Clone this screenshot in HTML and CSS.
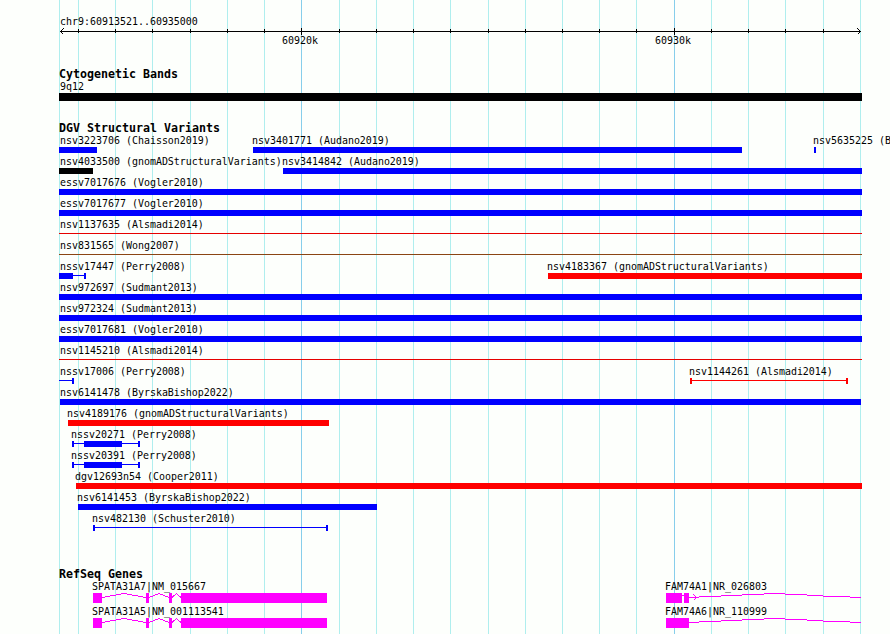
FILE: index.html
```
<!DOCTYPE html>
<html lang="en">
<head>
<meta charset="utf-8">
<title>chr9:60913521..60935000</title>
<link rel="stylesheet" href="styles.css">
</head>
<body>
<svg class="grid" width="890" height="634" aria-hidden="true">
<path class="minor" d="M59.5 0v634M78.5 0v634M115.5 0v634M152.5 0v634M190.5 0v634M227.5 0v634M264.5 0v634M339.5 0v634M376.5 0v634M413.5 0v634M450.5 0v634M488.5 0v634M525.5 0v634M562.5 0v634M599.5 0v634M636.5 0v634M711.5 0v634M748.5 0v634M785.5 0v634M823.5 0v634M860.5 0v634"/>
<path class="major" d="M301.5 0v634M674.5 0v634"/>
</svg>
<main>
<svg class="ruler">
<text x="60" y="25">chr9:60913521..60935000</text>
<path class="axis" d="M60 31.5H861M78.5 29v4M115.5 29v4M152.5 29v4M190.5 29v4M227.5 29v4M264.5 29v4M301.5 28v7M339.5 29v4M376.5 29v4M413.5 29v4M450.5 29v4M488.5 29v4M525.5 29v4M562.5 29v4M599.5 29v4M636.5 29v4M674.5 28v7M711.5 29v4M748.5 29v4M785.5 29v4M823.5 29v4"/>
<path class="axis" d="M63.5 28.5l-3 3l3 3M857.5 28.5l3 3l-3 3"/>
<text x="282" y="44">60920k</text>
<text x="655" y="44">60930k</text>
</svg>

<section class="track bands">
<h2>Cytogenetic Bands</h2>
<svg class="row"><text x="60" y="10">9q12</text><rect x="59" y="13" width="803" height="8"/></svg>
</section>

<section class="track variants">
<h2>DGV Structural Variants</h2>
<svg class="row"><text x="60" y="10">nsv3223706 (Chaisson2019)</text><rect class="gain" x="59" y="13" width="38" height="6"/><text x="252" y="10">nsv3401771 (Audano2019)</text><rect class="gain" x="253" y="13" width="489" height="6"/><text x="813" y="10">nsv5635225 (ByrskaBishop2022)</text><rect class="gain" x="814" y="13" width="2" height="6"/></svg>
<svg class="row"><text x="60" y="10">nsv4033500 (gnomADStructuralVariants)</text><rect x="59" y="13" width="34" height="6"/><text x="282" y="10">nsv3414842 (Audano2019)</text><rect class="gain" x="283" y="13" width="579" height="6"/></svg>
<svg class="row"><text x="60" y="10">essv7017676 (Vogler2010)</text><rect class="gain" x="59" y="13" width="803" height="6"/></svg>
<svg class="row"><text x="60" y="10">essv7017677 (Vogler2010)</text><rect class="gain" x="59" y="13" width="803" height="6"/></svg>
<svg class="row"><text x="60" y="10">nsv1137635 (Alsmadi2014)</text><rect class="thin-loss" x="59" y="15" width="803" height="1"/></svg>
<svg class="row"><text x="60" y="10">nsv831565 (Wong2007)</text><rect class="mixed" x="59" y="15" width="803" height="1"/></svg>
<svg class="row"><text x="60" y="10">nssv17447 (Perry2008)</text><path class="gain" d="M59 13h14v2h11v-2h2v6h-2v-3h-11v3h-14z"/><text x="547" y="10">nsv4183367 (gnomADStructuralVariants)</text><rect class="loss" x="548" y="13" width="314" height="6"/></svg>
<svg class="row"><text x="60" y="10">nsv972697 (Sudmant2013)</text><rect class="gain" x="59" y="13" width="803" height="6"/></svg>
<svg class="row"><text x="60" y="10">nsv972324 (Sudmant2013)</text><rect class="gain" x="59" y="13" width="803" height="6"/></svg>
<svg class="row"><text x="60" y="10">essv7017681 (Vogler2010)</text><rect class="gain" x="59" y="13" width="803" height="6"/></svg>
<svg class="row"><text x="60" y="10">nsv1145210 (Alsmadi2014)</text><rect class="thin-loss" x="59" y="15" width="803" height="1"/></svg>
<svg class="row"><text x="60" y="10">nssv17006 (Perry2008)</text><path class="gain" d="M59 15h13v-2h2v6h-2v-3h-13z"/><text x="689" y="10">nsv1144261 (Alsmadi2014)</text><path class="loss" d="M690 13h2v2h154v-2h2v6h-2v-3h-154v3h-2z"/></svg>
<svg class="row"><text x="60" y="10">nsv6141478 (ByrskaBishop2022)</text><rect class="gain" x="60" y="13" width="801" height="6"/></svg>
<svg class="row"><text x="67" y="10">nsv4189176 (gnomADStructuralVariants)</text><rect class="loss" x="68" y="13" width="261" height="6"/></svg>
<svg class="row"><text x="71" y="10">nssv20271 (Perry2008)</text><path class="gain" d="M72 13h2v2h10v-2h38v2h16v-2h2v6h-2v-3h-16v3h-38v-3h-10v3h-2z"/></svg>
<svg class="row"><text x="71" y="10">nssv20391 (Perry2008)</text><path class="gain" d="M72 13h2v2h10v-2h38v2h16v-2h2v6h-2v-3h-16v3h-38v-3h-10v3h-2z"/></svg>
<svg class="row"><text x="75" y="10">dgv12693n54 (Cooper2011)</text><rect class="loss" x="76" y="13" width="786" height="6"/></svg>
<svg class="row"><text x="77" y="10">nsv6141453 (ByrskaBishop2022)</text><rect class="gain" x="78" y="13" width="299" height="6"/></svg>
<svg class="row"><text x="92" y="10">nsv482130 (Schuster2010)</text><path class="gain" d="M93 13h2v2h231v-2h2v6h-2v-3h-231v3h-2z"/></svg>
</section>

<section class="track genes">
<h2>RefSeq Genes</h2>
<svg class="row"><text x="92" y="10">SPATA31A7|NM_015667</text><path class="exon" d="M93 13h9v10h-9zM146 13h3v10h-3zM169 13h3v10h-3zM181 13h146v10h-146z"/><path class="intron" d="M102 17.5L124 13.5L146 17.5M149 17.5L159 13.5L169 17.5M172 17.5L176.500 13.5L181 17.5"/><text x="665" y="10">FAM74A1|NR_026803</text><path class="exon" d="M666 13h16v10h-16zM684 13h5v10h-5z"/><path class="intron" d="M682 15.5h2M693.500 14.5l3 3l-3 3M689 17.5h10M699 16.5h22M721 15.5h21M742 14.5h22M764 13.5h21M785 14.5h22M807 15.5h16M823 16.5h27M850 17.5h11"/></svg>
<svg class="row"><text x="92" y="10">SPATA31A5|NM_001113541</text><path class="exon" d="M93 13h9v10h-9zM146 13h3v10h-3zM169 13h3v10h-3zM181 13h146v10h-146z"/><path class="intron" d="M102 17.5L124 13.5L146 17.5M149 17.5L159 13.5L169 17.5M172 17.5L176.500 13.5L181 17.5"/><text x="665" y="10">FAM74A6|NR_110999</text><path class="exon" d="M666 13h23v10h-23z"/><path class="intron" d="M689 17.5h10M699 16.5h22M721 15.5h21M742 14.5h22M764 13.5h21M785 14.5h22M807 15.5h16M823 16.5h27M850 17.5h11"/></svg>
</section>
</main>
</body>
</html>
```
FILE: styles.css
```
body {
  margin: 0;
  width: 890px;
  height: 634px;
  overflow: hidden;
  background: #fdfffc;
  color: #000;
  font-family: "DejaVu Sans Mono", monospace;
}
svg {
  display: block;
  shape-rendering: crispEdges;
}
.grid {
  position: absolute;
  top: 0;
  left: 0;
  z-index: -1;
}
.minor { stroke: #afeeee; }
.major { stroke: #87ceeb; }
.ruler {
  width: 890px;
  height: 66px;
}
.axis {
  fill: none;
  stroke: #000;
}
text {
  font-size: 11px;
  transform-box: fill-box;
  transform-origin: 0 0;
  transform: scaleX(0.906);
}
h2 {
  width: max-content;
  height: 14px;
  margin: 0 0 0 59px;
  font-size: 11.63px;
  line-height: 16px;
  font-weight: bold;
  white-space: pre;
}
.row {
  width: 890px;
  height: 21px;
}
.bands { height: 54px; }
.variants { height: 446px; }
.genes .row { height: 25px; }
.gain { fill: #00f; }
.loss { fill: #f00; }
.thin-loss { fill: #e60000; }
.mixed { fill: #8b4513; }
.exon { fill: #f0f; }
.intron {
  fill: none;
  stroke: #f0f;
}
```
